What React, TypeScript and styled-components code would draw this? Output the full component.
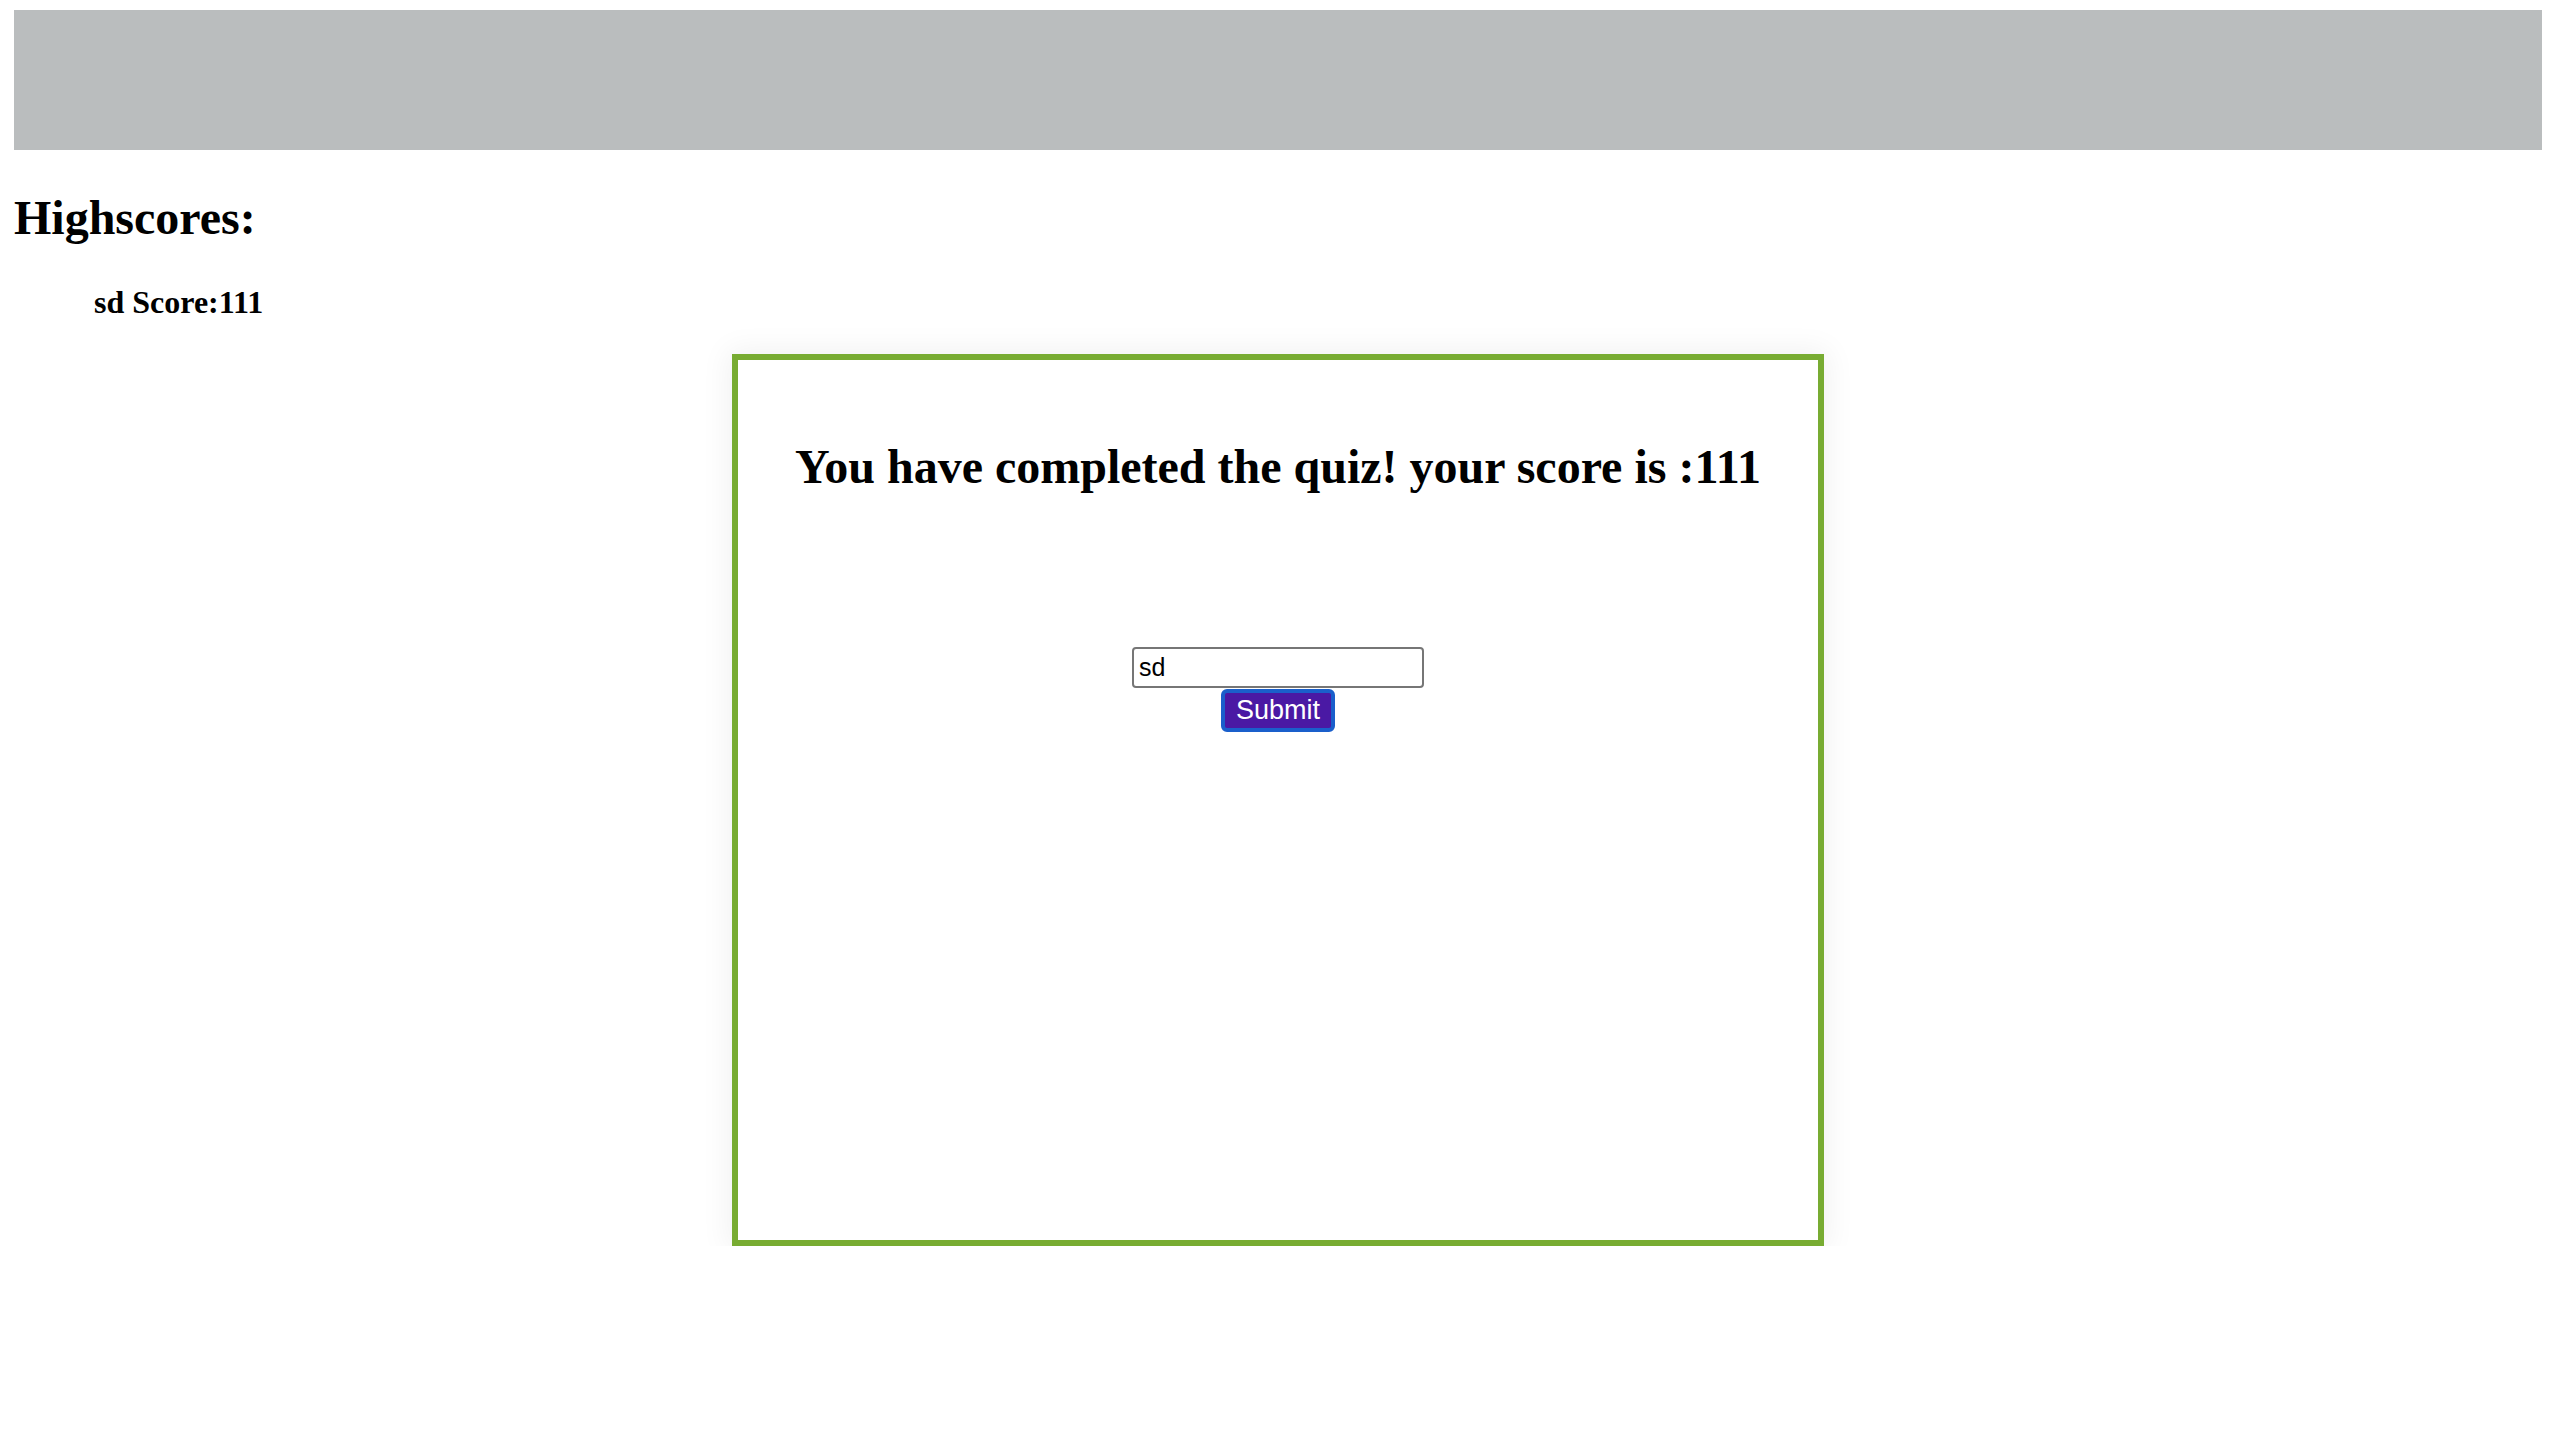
import React from 'react';
import styled, { createGlobalStyle } from 'styled-components';

const GlobalStyle = createGlobalStyle`
    body {
        margin: 10px 14px 0;
        background: #ffffff;
        font-family: "Liberation Serif", "Times New Roman", serif;
        color: #000000;
    }
`;

const TopBar = styled.header`
    height: 140px;
    background: #babdbe;
`;

const ScoresTitle = styled.h2`
    margin: 40px 0 0;
    font-size: 48px;
    line-height: 55px;
    font-weight: bold;
`;

const ScoreList = styled.ul`
    margin: 39px 0 0;
    padding-left: 80px;
    list-style: none;
`;

const ScoreItem = styled.li`
    font-size: 32px;
    line-height: 37px;
    font-weight: bold;
`;

const QuizCard = styled.section`
    box-sizing: border-box;
    width: 1092px;
    height: 892px;
    margin: 33px auto 0;
    padding-top: 79px;
    border: 6px solid #78ac32;
    box-shadow: 0 0 28px 4px rgba(0, 0, 0, 0.06);
    text-align: center;
`;

const QuizResult = styled.h3`
    margin: 0;
    font-size: 48px;
    line-height: 55px;
    font-weight: bold;
`;

const NameForm = styled.form`
    display: flex;
    flex-direction: column;
    align-items: center;
    margin-top: 153px;
`;

const NameInput = styled.input`
    box-sizing: border-box;
    width: 292px;
    height: 41px;
    padding: 0 5px;
    border: 2px solid #767676;
    border-radius: 4px;
    font-family: "Liberation Sans", Arial, sans-serif;
    font-size: 25px;
    color: #000000;
    outline: none;
`;

const SubmitButton = styled.button`
    box-sizing: border-box;
    width: 114px;
    height: 43px;
    margin-top: 1px;
    padding: 0;
    background: #4a19a4;
    border: 4px solid #1a5fcb;
    border-radius: 6px;
    color: #ffffff;
    font-family: "Liberation Sans", Arial, sans-serif;
    font-size: 27px;
    line-height: 1;
    cursor: pointer;
`;

type Score = {
    name: string,
    score: number,
};

const scores: Score[] = [{ name: 'sd', score: 111 }];

const App: React.FC = () => {
    return <>
        <GlobalStyle />
        <TopBar />
        <ScoresTitle>Highscores:</ScoresTitle>
        <ScoreList>
            {scores.map((item) => <ScoreItem key={item.name}>{item.name} Score:{item.score}</ScoreItem>)}
        </ScoreList>
        <QuizCard>
            <QuizResult>You have completed the quiz! your score is :111</QuizResult>
            <NameForm onSubmit={(e) => e.preventDefault()}>
                <NameInput type="text" defaultValue="sd" />
                <SubmitButton type="submit">Submit</SubmitButton>
            </NameForm>
        </QuizCard>
    </>;
};

export default App;
